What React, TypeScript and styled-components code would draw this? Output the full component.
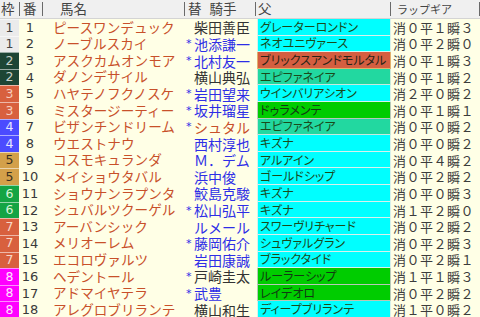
import React from "react";
import styled, { createGlobalStyle } from "styled-components";

const GlobalStyle = createGlobalStyle`
  html, body {
    margin: 0;
    padding: 0;
    background: #ffffe6;
  }
  body {
    font-family: "Noto Sans CJK JP", "Noto Sans", sans-serif;
  }
`;

type Waku = 1 | 2 | 3 | 4 | 5 | 6 | 7 | 8;
type SireKind = "cyan" | "coral" | "teal" | "green";

const wakuColors: Record<Waku, { bg: string; fg: string }> = {
  1: { bg: "#ebebeb", fg: "#444" },
  2: { bg: "#1d4535", fg: "#c8d0c8" },
  3: { bg: "#d8603e", fg: "#f6cdbd" },
  4: { bg: "#4b4bff", fg: "#e6e6ff" },
  5: { bg: "#d3a04a", fg: "#3a3020" },
  6: { bg: "#14a444", fg: "#d8f4d8" },
  7: { bg: "#d8603e", fg: "#f8d8c8" },
  8: { bg: "#ff00ff", fg: "#ffe4ff" },
};

const sireColors: Record<SireKind, { bg: string; border: string; fg: string }> = {
  cyan: { bg: "#00ffff", border: "#d8f0ec", fg: "#1a4a1a" },
  coral: { bg: "#d45e40", border: "#e2b06c", fg: "#2a2418" },
  teal: { bg: "#22d8a0", border: "#c8e8dc", fg: "#1a4a1a" },
  green: { bg: "#00cc00", border: "#b8c8b8", fg: "#123812" },
};

type Row = {
  waku: Waku;
  ban: number;
  name: string;
  star: boolean;
  jockey: string;
  tone: "dark" | "blue" | "red";
  sire: string;
  kind: SireKind;
  lap: string;
};

const rows: Row[] = [
  { waku: 1, ban: 1, name: "ピースワンデュック", star: false, jockey: "柴田善臣", tone: "dark", sire: "グレーターロンドン", kind: "cyan", lap: "消０平１瞬３" },
  { waku: 1, ban: 2, name: "ノーブルスカイ", star: true, jockey: "池添謙一", tone: "blue", sire: "ネオユニヴァース", kind: "cyan", lap: "消０平２瞬０" },
  { waku: 2, ban: 3, name: "アスクカムオンモア", star: true, jockey: "北村友一", tone: "blue", sire: "ブリックスアンドモルタル", kind: "coral", lap: "消０平１瞬３" },
  { waku: 2, ban: 4, name: "ダノンデサイル", star: false, jockey: "横山典弘", tone: "dark", sire: "エピファネイア", kind: "teal", lap: "消０平１瞬２" },
  { waku: 3, ban: 5, name: "ハヤテノフクノスケ", star: true, jockey: "岩田望来", tone: "blue", sire: "ウインバリアシオン", kind: "cyan", lap: "消２平０瞬２" },
  { waku: 3, ban: 6, name: "ミスタージーティー", star: true, jockey: "坂井瑠星", tone: "blue", sire: "ドゥラメンテ", kind: "green", lap: "消０平１瞬１" },
  { waku: 4, ban: 7, name: "ビザンチンドリーム", star: true, jockey: "シュタル", tone: "red", sire: "エピファネイア", kind: "teal", lap: "消０平０瞬２" },
  { waku: 4, ban: 8, name: "ウエストナウ", star: false, jockey: "西村淳也", tone: "blue", sire: "キズナ", kind: "cyan", lap: "消０平０瞬２" },
  { waku: 5, ban: 9, name: "コスモキュランダ", star: false, jockey: "Ｍ．デム", tone: "blue", sire: "アルアイン", kind: "cyan", lap: "消０平４瞬２" },
  { waku: 5, ban: 10, name: "メイショウタバル", star: false, jockey: "浜中俊", tone: "blue", sire: "ゴールドシップ", kind: "cyan", lap: "消０平２瞬２" },
  { waku: 6, ban: 11, name: "ショウナンラプンタ", star: false, jockey: "鮫島克駿", tone: "blue", sire: "キズナ", kind: "cyan", lap: "消０平０瞬３" },
  { waku: 6, ban: 12, name: "シュバルツクーゲル", star: true, jockey: "松山弘平", tone: "blue", sire: "キズナ", kind: "cyan", lap: "消１平２瞬０" },
  { waku: 7, ban: 13, name: "アーバンシック", star: false, jockey: "ルメール", tone: "blue", sire: "スワーヴリチャード", kind: "cyan", lap: "消０平２瞬２" },
  { waku: 7, ban: 14, name: "メリオーレム", star: true, jockey: "藤岡佑介", tone: "blue", sire: "シュヴァルグラン", kind: "cyan", lap: "消０平２瞬３" },
  { waku: 7, ban: 15, name: "エコロヴァルツ", star: false, jockey: "岩田康誠", tone: "blue", sire: "ブラックタイド", kind: "cyan", lap: "消０平２瞬１" },
  { waku: 8, ban: 16, name: "ヘデントール", star: true, jockey: "戸崎圭太", tone: "dark", sire: "ルーラーシップ", kind: "green", lap: "消１平１瞬３" },
  { waku: 8, ban: 17, name: "アドマイヤテラ", star: true, jockey: "武豊", tone: "blue", sire: "レイデオロ", kind: "green", lap: "消０平２瞬２" },
  { waku: 8, ban: 18, name: "アレグロブリランテ", star: false, jockey: "横山和生", tone: "dark", sire: "ディープブリランテ", kind: "cyan", lap: "消１平０瞬２" },
];

const toneColor = { dark: "#333333", blue: "#2e2ee6", red: "#c8502a" };

const Table = styled.div`
  display: grid;
  grid-template-columns: 20px 23px 142px 71px 135px 1fr;
  grid-template-rows: 19px;
  grid-auto-rows: 16.62px;
  width: 480px;
  background: #ffffe6;
  color: #333;
  font-size: 14px;
  line-height: 1;
`;

const HeadCell = styled.div<{ $pad: number; $small?: boolean }>`
  position: relative;
  display: flex;
  align-items: center;
  padding-left: ${(p) => p.$pad}px;
  background: #f0f0f0;
  border-bottom: 1px solid #d4d4d4;
  color: #444;
  font-size: ${(p) => (p.$small ? "11px" : "13.5px")};
  white-space: nowrap;

  &::after {
    content: "";
    position: absolute;
    right: 0;
    top: 2px;
    bottom: 2px;
    width: 1px;
    background: #6a6a6a;
    box-shadow: 1px 0 0 #ffffff;
  }
`;

const HeadGap = styled.span`
  display: inline-block;
  width: 8px;
`;

const WakuCell = styled.div<{ $waku: Waku }>`
  display: flex;
  align-items: center;
  justify-content: center;
  margin-right: 1px;
  background: ${(p) => wakuColors[p.$waku].bg};
  color: ${(p) => wakuColors[p.$waku].fg};
  border-top: 1px solid rgba(255, 255, 255, 0.55);
  font-family: "DejaVu Sans", sans-serif;
  font-size: 12.5px;
`;

const BanCell = styled.div`
  display: flex;
  align-items: center;
  justify-content: center;
  padding-right: 3px;
  font-family: "DejaVu Sans", sans-serif;
  font-size: 13px;
  color: #3a3a3a;
`;

const NameCell = styled.div`
  display: flex;
  align-items: center;
  padding-left: 10px;
  color: #c8502a;
  font-size: 13.6px;
  white-space: nowrap;
`;

const JockeyCell = styled.div<{ $tone: keyof typeof toneColor }>`
  display: flex;
  align-items: center;
  color: ${(p) => toneColor[p.$tone]};
  font-size: 14px;
  white-space: nowrap;
`;

const Star = styled.span`
  display: inline-block;
  width: 8px;
  padding-left: 1px;
  color: #2e2ee6;
  font-family: "DejaVu Sans", sans-serif;
  font-size: 11px;
`;

const SireCell = styled.div<{ $kind: SireKind }>`
  display: flex;
  align-items: center;
  margin-left: 1px;
  padding-left: 2px;
  background: ${(p) => sireColors[p.$kind].bg};
  border: 1px solid ${(p) => sireColors[p.$kind].border};
  border-top-width: 0;
  color: ${(p) => sireColors[p.$kind].fg};
  font-size: 12px;
  font-feature-settings: "palt";
  white-space: nowrap;
`;

const LapCell = styled.div`
  display: flex;
  align-items: center;
  padding-left: 2px;
  color: #3c3c3c;
  font-size: 13px;
  letter-spacing: 0.5px;
  white-space: nowrap;
`;

export default function App() {
  return (
    <>
      <GlobalStyle />
      <Table>
        <HeadCell $pad={1}>枠</HeadCell>
        <HeadCell $pad={3}>番</HeadCell>
        <HeadCell $pad={17}>馬名</HeadCell>
        <HeadCell $pad={3}>
          替<HeadGap />騎手
        </HeadCell>
        <HeadCell $pad={2}>父</HeadCell>
        <HeadCell $pad={6} $small>
          ラップギア
        </HeadCell>
        {rows.map((r) => (
          <React.Fragment key={r.ban}>
            <WakuCell $waku={r.waku}>{r.waku}</WakuCell>
            <BanCell>{r.ban}</BanCell>
            <NameCell>{r.name}</NameCell>
            <JockeyCell $tone={r.tone}>
              <Star>{r.star ? "*" : ""}</Star>
              {r.jockey}
            </JockeyCell>
            <SireCell $kind={r.kind}>{r.sire}</SireCell>
            <LapCell>{r.lap}</LapCell>
          </React.Fragment>
        ))}
      </Table>
    </>
  );
}
